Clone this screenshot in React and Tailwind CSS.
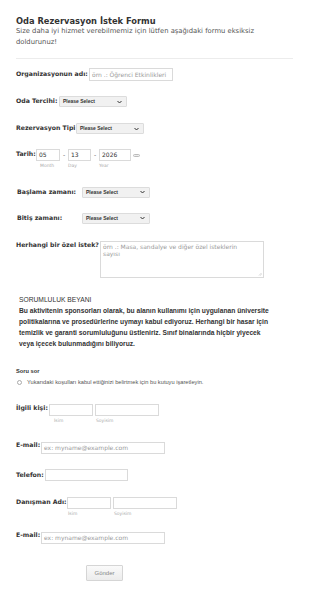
import React from "react";

const Chevron = () => (
  <svg width="5" height="4" viewBox="0 0 10 8" className="shrink-0">
    <path d="M1 2 L5 6 L9 2" stroke="#333" strokeWidth="2" fill="none" />
  </svg>
);

const Select = ({ w }) => (
  <div
    className="h-[11px] flex items-center justify-between pl-[3px] pr-[4px] border border-[#dcdcdc] bg-[#f1f1f1] rounded-[1px]"
    style={{ width: w }}
  >
    <span className="text-[5px] font-bold text-[#333] font-['Liberation_Sans',sans-serif] leading-none">
      Please Select
    </span>
    <Chevron />
  </div>
);

const Input = ({ w, h = 12, ph, val, cls = "" }) => (
  <div
    className={`border border-[#dadada] bg-white flex items-center px-[2px] shrink-0 ${cls}`}
    style={{ width: w, height: h }}
  >
    {ph && <span className="text-[6px] text-[#9a9a9a] whitespace-nowrap leading-none">{ph}</span>}
    {val && <span className="text-[6px] text-[#333] leading-none">{val}</span>}
  </div>
);

const Label = ({ children, w, cls = "" }) => (
  <div
    className={`text-[6.2px] font-bold text-[#333] whitespace-nowrap leading-none shrink-0 ${cls}`}
    style={{ width: w }}
  >
    {children}
  </div>
);

const Sub = ({ children, w, cls = "" }) => (
  <div className={`text-[4.5px] text-[#aaa] leading-none ${cls}`} style={{ width: w }}>
    {children}
  </div>
);

export default function App() {
  return (
    <div className="w-[310px] h-[599px] bg-white font-['DejaVu_Sans',sans-serif] pl-[16px] pt-[17px] overflow-hidden">
      <div className="text-[8.3px] font-bold text-[#333] leading-[9px] whitespace-nowrap">Oda Rezervasyon İstek Formu</div>
      <div className="text-[6.8px] text-[#555] leading-[11px] whitespace-nowrap">
        Size daha iyi hizmet verebilmemiz için lütfen aşağıdaki formu eksiksiz
        <br />
        doldurunuz!
      </div>
      <div className="mt-[10px] w-[277px] h-px bg-[#ececec]" />

      {/* Organizasyon */}
      <div className="mt-[9px] flex items-center">
        <Label w="73px">Organizasyonun adı:</Label>
        <Input w="84px" h={13} ph="örn .: Öğrenci Etkinlikleri" />
      </div>

      {/* Oda tercihi */}
      <div className="mt-[15px] flex items-center">
        <Label w="43px">Oda Tercihi:</Label>
        <Select w="68px" />
      </div>

      {/* Rezervasyon Tipi */}
      <div className="mt-[16px] flex items-center">
        <Label w="60px">Rezervasyon Tipi</Label>
        <Select w="68px" />
      </div>

      {/* Tarih */}
      <div className="mt-[15px] flex items-start">
        <Label w="20px" cls="pt-[2px]">Tarih:</Label>
        <div className="flex flex-col">
          <div className="flex items-center">
            <Input w="24px" h={12} val="05" />
            <span className="w-[8px] text-center text-[6px] text-[#555] leading-none">-</span>
            <Input w="23px" h={12} val="13" />
            <span className="w-[8px] text-center text-[6px] text-[#555] leading-none">-</span>
            <Input w="32px" h={12} val="2026" />
            <div className="ml-[2px] w-[7px] h-[3px] rounded-full border border-[#bbb] bg-[#eee]" />
          </div>
          <div className="flex mt-[3px]">
            <Sub w="32px" cls="pl-[4px]">Month</Sub>
            <Sub w="31px">Day</Sub>
            <Sub w="32px">Year</Sub>
          </div>
        </div>
      </div>

      {/* Başlama */}
      <div className="mt-[18px] flex items-center pl-[1px]">
        <Label w="65px">Başlama zamanı:</Label>
        <Select w="68px" />
      </div>

      {/* Bitiş */}
      <div className="mt-[15px] flex items-center pl-[1px]">
        <Label w="65px">Bitiş zamanı:</Label>
        <Select w="68px" />
      </div>

      {/* Özel istek */}
      <div className="mt-[17px] flex items-start">
        <Label w="84px" cls="pt-[1px]">Herhangi bir özel istek?</Label>
        <div className="relative w-[164px] h-[37px] border border-[#dadada] px-[2px] pt-[1px]">
          <div className="text-[6px] text-[#9a9a9a] leading-[7px]">
            örn .: Masa, sandalye ve diğer özel isteklerin
            <br />
            sayısı
          </div>
          <svg className="absolute right-[1px] bottom-[1px]" width="4" height="4" viewBox="0 0 8 8">
            <path d="M7 2 L2 7 M7 5 L5 7" stroke="#aaa" strokeWidth="1" />
          </svg>
        </div>
      </div>

      {/* Sorumluluk */}
      <div className="mt-[16px] pl-[3px] font-['Liberation_Sans',sans-serif] text-[#333] whitespace-nowrap">
        <div className="text-[6.7px] leading-[11px]">SORUMLULUK BEYANI</div>
        <div className="text-[6.7px] font-bold leading-[11px]">
          Bu aktivitenin sponsorları olarak, bu alanın kullanımı için uygulanan üniversite
          <br />
          politikalarına ve prosedürlerine uymayı kabul ediyoruz. Herhangi bir hasar için
          <br />
          temizlik ve garanti sorumluluğunu üstleniriz. Sınıf binalarında hiçbir yiyecek
          <br />
          veya içecek bulunmadığını biliyoruz.
        </div>
      </div>

      {/* Soru sor */}
      <div className="mt-[17px] font-['Liberation_Sans',sans-serif]">
        <div className="text-[5.7px] font-bold text-[#333] leading-[10px]">Soru sor</div>
        <div className="flex items-center mt-[4px] pl-[1px]">
          <div className="w-[5px] h-[5px] rounded-full border border-[#aaa] bg-white shrink-0" />
          <span className="ml-[5px] text-[5.7px] text-[#555] leading-none whitespace-nowrap">
            Yukarıdaki koşulları kabul ettiğinizi belirtmek için bu kutuyu işaretleyin.
          </span>
        </div>
      </div>

      {/* İlgili kişi */}
      <div className="mt-[19px] flex items-start">
        <Label w="33px" cls="pt-[1px]">İlgili kişi:</Label>
        <div className="flex flex-col">
          <div className="flex gap-[2px]">
            <Input w="44px" h={12} />
            <Input w="64px" h={12} />
          </div>
          <div className="flex mt-[3px]">
            <Sub w="46px" cls="pl-[5px]">İsim</Sub>
            <Sub w="64px" cls="pl-[1px]">Soyisim</Sub>
          </div>
        </div>
      </div>

      {/* E-mail */}
      <div className="mt-[17px] flex items-start">
        <Label w="25px" cls="pt-[1px]">E-mail:</Label>
        <Input w="124px" h={12} ph="ex: myname@example.com" cls="mt-[1px]" />
      </div>

      {/* Telefon */}
      <div className="mt-[15px] flex items-center">
        <Label w="29px">Telefon:</Label>
        <Input w="83px" h={12} />
      </div>

      {/* Danışman */}
      <div className="mt-[16px] flex items-start">
        <Label w="51px" cls="pt-[2px]">Danışman Adı:</Label>
        <div className="flex flex-col">
          <div className="flex gap-[2px]">
            <Input w="44px" h={12} />
            <Input w="64px" h={12} />
          </div>
          <div className="flex mt-[3px]">
            <Sub w="46px" cls="pl-[1px]">İsim</Sub>
            <Sub w="64px" cls="pl-[1px]">Soyisim</Sub>
          </div>
        </div>
      </div>

      {/* E-mail 2 */}
      <div className="mt-[15px] flex items-start">
        <Label w="25px" cls="pt-[1px]">E-mail:</Label>
        <Input w="124px" h={12} ph="ex: myname@example.com" cls="mt-[1px]" />
      </div>

      {/* Button */}
      <div className="mt-[21px] pl-[70px]">
        <div className="w-[37px] h-[16px] border border-[#d5d5d5] rounded-[1px] bg-gradient-to-b from-[#fafafa] to-[#ececec] flex items-center justify-center text-[6px] text-[#888] font-['Liberation_Sans',sans-serif]">
          Gönder
        </div>
      </div>
    </div>
  );
}
